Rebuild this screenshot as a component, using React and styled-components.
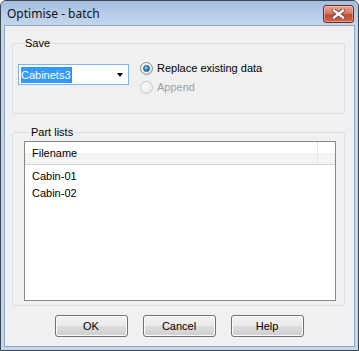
import React from "react";
import styled, { createGlobalStyle } from "styled-components";

const GlobalStyle = createGlobalStyle`
  html, body {
    margin: 0;
    padding: 0;
    background: #ffffff;
  }
  body {
    font-family: "Liberation Sans", Arial, sans-serif;
    font-size: 11px;
    color: #000;
  }
`;

const Window = styled.div`
  width: 359px;
  height: 351px;
  box-sizing: border-box;
  border: 1px solid #3d4550;
  border-radius: 6px 6px 0 0;
  background: #c2d6ee;
  display: flex;
  flex-direction: column;
  overflow: hidden;
`;

const TitleBar = styled.div`
  height: 24px;
  flex: none;
  display: flex;
  align-items: center;
  justify-content: space-between;
  padding: 0 4px 0 6px;
  background: linear-gradient(#a3bde0, #b9cfea 60%, #c2d6ee);
`;

const Title = styled.span`
  font-family: "Noto Sans", "Liberation Sans", sans-serif;
  font-size: 12px;
  color: #111;
  margin-top: 1px;
`;

const CloseButton = styled.div`
  width: 29px;
  height: 16px;
  margin-top: 1px;
  border: 1px solid #6b2a1c;
  border-radius: 3px;
  background: linear-gradient(#e8a592, #d67a63 45%, #c24a2f 55%, #d1664b);
  box-shadow: inset 0 0 0 1px rgba(255, 220, 210, 0.45);
  display: flex;
  align-items: center;
  justify-content: center;
`;

const Client = styled.div`
  flex: 1;
  margin: 0 3px 3px 3px;
  border: 1px solid #8fa7c4;
  background: #f0f0f0;
  padding: 11px 9px 0 7px;
  display: flex;
  flex-direction: column;
`;

const Group = styled.fieldset`
  margin: 0 0 ${(p) => p.$gap || 0}px 0;
  padding: ${(p) => p.$pad};
  border: 1px solid #d5dfe5;
  border-radius: 3px;
  min-width: 0;
`;

const Legend = styled.legend`
  padding: 0 2px;
  margin-left: 5px;
  line-height: 13px;
`;

const SaveRow = styled.div`
  display: flex;
  align-items: flex-start;
`;

const Combo = styled.div`
  box-sizing: border-box;
  width: 111px;
  height: 21px;
  border: 1px solid #7eb4ea;
  background: #fff;
  display: flex;
  align-items: center;
  justify-content: space-between;
  padding: 0 5px 0 2px;
`;

const Selected = styled.span`
  background: #3399ff;
  color: #fff;
  padding: 1px 0;
  line-height: 14px;
  border-right: 1px solid #c8650f;
`;

const Arrow = styled.span`
  width: 0;
  height: 0;
  border-left: 3.5px solid transparent;
  border-right: 3.5px solid transparent;
  border-top: 4px solid #000;
  margin-top: 1px;
`;

const Options = styled.div`
  margin-left: 11px;
  margin-top: -3px;
  display: flex;
  flex-direction: column;
  gap: 5px;
`;

const Option = styled.label`
  display: flex;
  align-items: center;
  gap: 4px;
  height: 14px;
  color: ${(p) => (p.$disabled ? "#a0a0a0" : "#000")};
`;

const Radio = styled.span`
  width: 11px;
  height: 11px;
  border-radius: 50%;
  border: 1px solid ${(p) => (p.$disabled ? "#c8c8c8" : "#8e8f8f")};
  background: ${(p) =>
    p.$disabled
      ? "radial-gradient(circle at 40% 35%, #fafafa, #e6e6e6)"
      : "radial-gradient(circle at 40% 35%, #ffffff, #dcdcdc)"};
  display: flex;
  align-items: center;
  justify-content: center;
  flex: none;
`;

const Dot = styled.span`
  width: 7px;
  height: 7px;
  border-radius: 50%;
  background: radial-gradient(circle at 40% 35%, #9ee0ff, #2a8ad4 50%, #0d4f8a);
  border: 0.5px solid #1d5580;
  box-sizing: border-box;
`;

const ListView = styled.div`
  height: 158px;
  border: 1px solid #828790;
  background: #fff;
  display: flex;
  flex-direction: column;
`;

const Header = styled.div`
  height: 22px;
  display: flex;
  border-bottom: 1px solid #d5d5d5;
  background: linear-gradient(#ffffff 50%, #f3f4f6 50%);
`;

const HeaderCell = styled.div`
  width: ${(p) => p.$w};
  flex: ${(p) => (p.$grow ? 1 : "none")};
  display: flex;
  align-items: center;
  padding-left: 7px;
  border-right: ${(p) => (p.$grow ? "none" : "1px solid #e3e5e8")};
  box-sizing: border-box;
`;

const Rows = styled.div`
  padding: 3px 0 0 7px;
  display: flex;
  flex-direction: column;
`;

const Row = styled.div`
  height: 17px;
  line-height: 17px;
`;

const Buttons = styled.div`
  display: flex;
  justify-content: center;
  gap: 15px;
  margin-top: 9px;
  padding-left: 1px;
`;

const Button = styled.button`
  width: 73px;
  height: 22px;
  border: 1px solid #707070;
  border-radius: 3px;
  background: linear-gradient(#f2f2f2, #ebebeb 50%, #dddddd 50%, #cfcfcf);
  box-shadow: inset 0 0 0 1px #fcfcfc;
  font-family: "Liberation Sans", Arial, sans-serif;
  font-size: 11px;
  color: #000;
  padding: 0;
`;

function CloseGlyph() {
  return (
    <svg width="13" height="10" viewBox="0 0 13 10">
      <path d="M2 1.5 L11 8.5 M11 1.5 L2 8.5" stroke="#5b3a34" strokeWidth="4" strokeLinecap="square" />
      <path d="M2 1.5 L11 8.5 M11 1.5 L2 8.5" stroke="#ffffff" strokeWidth="2.4" strokeLinecap="square" />
    </svg>
  );
}

export default function App() {
  return (
    <>
      <GlobalStyle />
      <Window>
        <TitleBar>
          <Title>Optimise - batch</Title>
          <CloseButton>
            <CloseGlyph />
          </CloseButton>
        </TitleBar>
        <Client>
          <Group $pad="14px 6px 19px 5px" $gap={12}>
            <Legend>Save</Legend>
            <SaveRow>
              <Combo>
                <Selected>Cabinets3</Selected>
                <Arrow />
              </Combo>
              <Options>
                <Option>
                  <Radio>
                    <Dot />
                  </Radio>
                  Replace existing data
                </Option>
                <Option $disabled>
                  <Radio $disabled />
                  Append
                </Option>
              </Options>
            </SaveRow>
          </Group>
          <Group $pad="2px 8px 4px 11px">
            <Legend>Part lists</Legend>
            <ListView>
              <Header>
                <HeaderCell $w="293px">Filename</HeaderCell>
                <HeaderCell $grow />
              </Header>
              <Rows>
                <Row>Cabin-01</Row>
                <Row>Cabin-02</Row>
              </Rows>
            </ListView>
          </Group>
          <Buttons>
            <Button>OK</Button>
            <Button>Cancel</Button>
            <Button>Help</Button>
          </Buttons>
        </Client>
      </Window>
    </>
  );
}
